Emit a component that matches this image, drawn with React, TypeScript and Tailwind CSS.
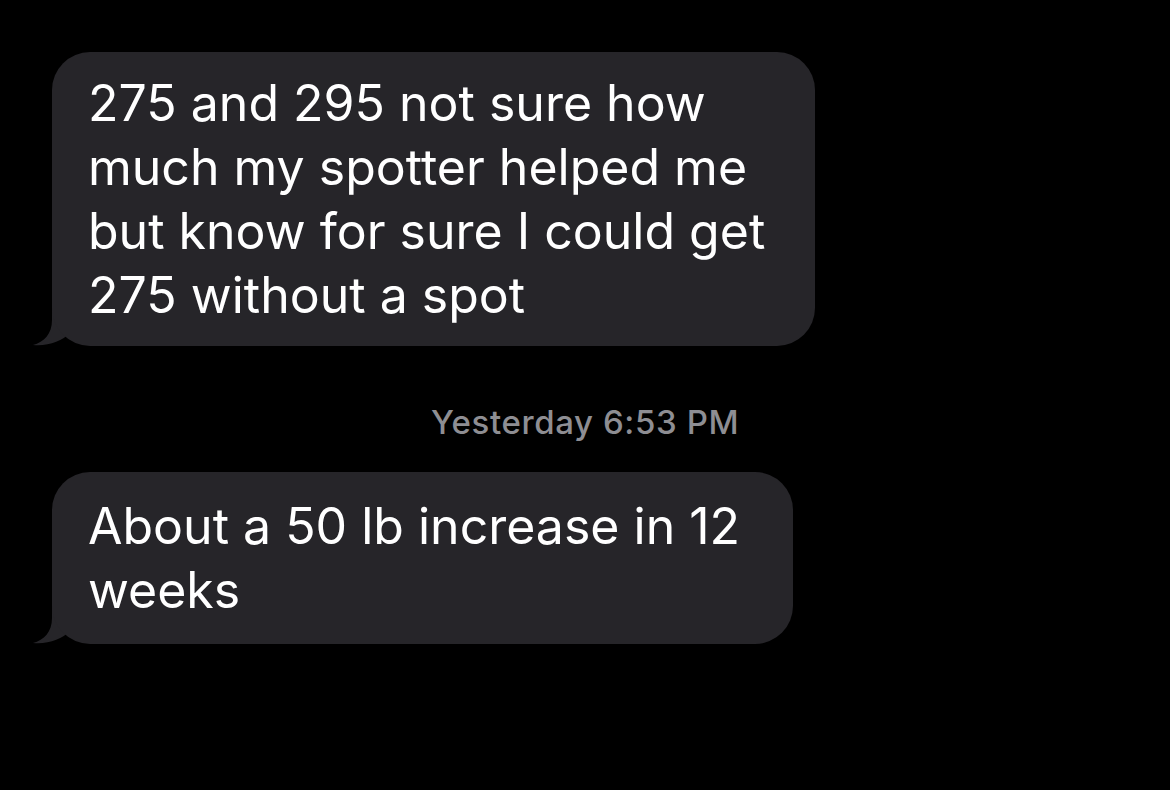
const Tail = () => (
  <svg
    className="absolute -left-[20px] bottom-0"
    width="60"
    height="50"
    viewBox="0 0 60 50"
  >
    <path
      d="M20 6 L20 24 C20 38 12 46 1 49 C16 50.5 30 45 38 37 L44 16 Z"
      fill="#262529"
    />
  </svg>
);

const Bubble: React.FC<{ lines: string[]; width: string; pad: string }> = ({ lines, width, pad }) => (
  <div className={`relative ${width}`}>
    <Tail />
    <div className={`relative rounded-[38px] bg-[#262529] pl-[36px] pr-6 ${pad} text-[50px] leading-[64px] text-white`}>
      {lines.map((l) => (
        <div key={l} className="whitespace-nowrap">
          {l}
        </div>
      ))}
    </div>
  </div>
);

export default function App() {
  return (
    <div className="h-[790px] w-[1170px] overflow-hidden bg-black font-['Inter',sans-serif]">
      <div className="flex flex-col pl-[52px] pt-[52px]">
        <Bubble
          width="w-[763px]"
          pad="py-[19px]"
          lines={[
            '275 and 295 not sure how',
            'much my spotter helped me',
            'but know for sure I could get',
            '275 without a spot',
          ]}
        />
        <div className="mt-[56px] mb-[30px] w-[1066px] text-center text-[33px] font-medium leading-[40px] tracking-[0.6px] text-[#8e8e93]">
          Yesterday 6:53 PM
        </div>
        <Bubble
          width="w-[741px]"
          pad="py-[22px]"
          lines={['About a 50 lb increase in 12', 'weeks']}
        />
      </div>
    </div>
  );
}
